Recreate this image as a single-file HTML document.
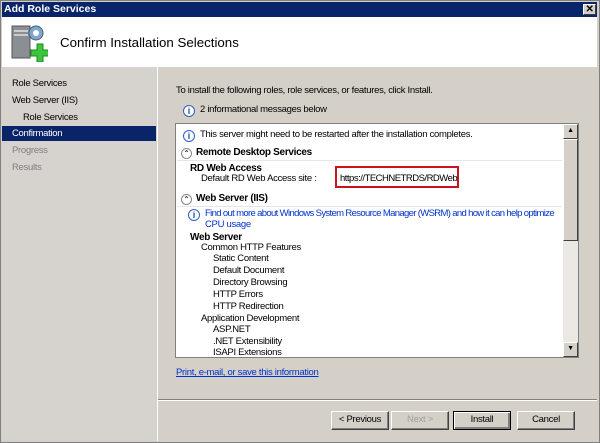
<!DOCTYPE html>
<html><head><style>
*{margin:0;padding:0;box-sizing:border-box}
body{width:600px;height:443px;background:#d4d0c8;font-family:"Liberation Sans",sans-serif;font-size:9.5px;letter-spacing:-0.3px;position:relative;overflow:hidden;color:#000}
.a{position:absolute;white-space:nowrap}
.b{font-weight:bold;font-size:10px}
.btn{position:absolute;top:411px;height:19px;width:58px;background:#d4d0c8;border:1px solid;border-color:#fff #404040 #404040 #fff;box-shadow:inset -1px -1px #808080;text-align:center;line-height:16px}
.i{display:inline-block;width:12px;height:12px;border:1px solid #3060c0;border-radius:50%;color:#2050b0;font-size:9px;line-height:10px;text-align:center;font-weight:bold;background:#fff;vertical-align:-2px;margin-right:5px;letter-spacing:0}
.c{display:inline-block;width:11px;height:11px;border:1px solid #888;border-radius:50%;font-size:8px;line-height:9px;text-align:center;background:#fff;vertical-align:-1px;margin-right:4px;font-weight:normal;letter-spacing:0}
</style></head><body>
<div class="a" style="left:0;top:0;width:600px;height:443px;border:1px solid #808080"></div>
<div class="a" style="left:2px;top:2px;width:595px;height:15px;background:#0a246a"></div>
<div class="a b" style="left:4px;top:3px;color:#fff;font-size:10.5px;letter-spacing:0">Add Role Services</div>
<div class="a" style="left:583px;top:4px;width:13px;height:11px;background:#d4d0c8;border:1px solid;border-color:#fff #404040 #404040 #fff;font-size:10px;line-height:9px;text-align:center;font-weight:bold">✕</div>
<div class="a" style="left:2px;top:17px;width:595px;height:50px;background:#fff"></div>
<svg class="a" style="left:10px;top:22px" width="38" height="40"><rect x="2" y="4" width="18" height="32" fill="#8a8f96" stroke="#555"/><rect x="4" y="8" width="14" height="2" fill="#ccc"/><rect x="4" y="12" width="14" height="2" fill="#ccc"/><circle cx="26" cy="11" r="7" fill="#7fa7c9" stroke="#406080"/><circle cx="26" cy="11" r="3" fill="#fff"/><path d="M27 22h6v6h6v6h-6v6h-6v-6h-6v-6h6z" fill="#3cc53c" stroke="#1a8a1a"/></svg>
<div class="a" style="left:60px;top:35px;font-size:13.3px;letter-spacing:0">Confirm Installation Selections</div>
<div class="a" style="left:2px;top:67px;width:155px;height:374px;background:#d6d3ce"></div>
<div class="a" style="left:157px;top:67px;width:1px;height:374px;background:#fff"></div>
<div class="a" style="left:12px;top:78px">Role Services</div>
<div class="a" style="left:12px;top:95px">Web Server (IIS)</div>
<div class="a" style="left:23px;top:112px">Role Services</div>
<div class="a" style="left:2px;top:126px;width:154px;height:15px;background:#0a246a"></div>
<div class="a" style="left:12px;top:128px;color:#fff">Confirmation</div>
<div class="a" style="left:12px;top:145px;color:#808080">Progress</div>
<div class="a" style="left:12px;top:162px;color:#808080">Results</div>
<div class="a" style="left:176px;top:85px">To install the following roles, role services, or features, click Install.</div>
<div class="a" style="left:183px;top:104px"><span class="i">i</span>2 informational messages below</div>
<div class="a" style="left:175px;top:123px;width:404px;height:235px;background:#fff;border:1px solid #808080"></div>
<div class="a" style="left:563px;top:124px;width:15px;height:233px;background:#ece9e4"></div>
<div class="a" style="left:563px;top:124px;width:15px;height:15px;background:#d4d0c8;border:1px solid;border-color:#fff #404040 #404040 #fff;font-size:7px;text-align:center;line-height:12px">▲</div>
<div class="a" style="left:563px;top:342px;width:15px;height:15px;background:#d4d0c8;border:1px solid;border-color:#fff #404040 #404040 #fff;font-size:7px;text-align:center;line-height:12px">▼</div>
<div class="a" style="left:563px;top:139px;width:15px;height:102px;background:#d4d0c8;border:1px solid;border-color:#fff #404040 #404040 #fff"></div>
<div class="a" style="left:183px;top:129px"><span class="i">i</span>This server might need to be restarted after the installation completes.</div>
<div class="a b" style="left:181px;top:147px"><span class="c">⌃</span>Remote Desktop Services</div>
<div class="a" style="left:177px;top:160px;width:385px;height:1px;background:#e6e6e6"></div>
<div class="a b" style="left:190px;top:163px">RD Web Access</div>
<div class="a" style="left:201px;top:173px">Default RD Web Access site :</div>
<div class="a" style="left:335px;top:166px;width:124px;height:22px;border:2px solid #c8141e"></div>
<div class="a" style="left:340px;top:173px;letter-spacing:-0.5px">https://TECHNETRDS/RDWeb</div>
<div class="a b" style="left:181px;top:193px"><span class="c">⌃</span>Web Server (IIS)</div>
<div class="a" style="left:177px;top:206px;width:385px;height:1px;background:#e6e6e6"></div>
<div class="a" style="left:188px;top:208px;color:#0033cc;letter-spacing:-0.65px"><span class="i">i</span>Find out more about Windows System Resource Manager (WSRM) and how it can help optimize</div>
<div class="a" style="left:205px;top:219px;color:#0033cc">CPU usage</div>
<div class="a b" style="left:190px;top:232px">Web Server</div>
<div class="a" style="left:201px;top:242px">Common HTTP Features</div>
<div class="a" style="left:213px;top:253px">Static Content</div>
<div class="a" style="left:213px;top:265px">Default Document</div>
<div class="a" style="left:213px;top:277px">Directory Browsing</div>
<div class="a" style="left:213px;top:289px">HTTP Errors</div>
<div class="a" style="left:213px;top:301px">HTTP Redirection</div>
<div class="a" style="left:201px;top:313px">Application Development</div>
<div class="a" style="left:213px;top:324px">ASP.NET</div>
<div class="a" style="left:213px;top:336px">.NET Extensibility</div>
<div class="a" style="left:213px;top:347px">ISAPI Extensions</div>
<div class="a" style="left:176px;top:367px;color:#0033cc;text-decoration:underline">Print, e-mail, or save this information</div>
<div class="a" style="left:158px;top:399px;width:439px;height:1px;background:#808080"></div>
<div class="a" style="left:158px;top:400px;width:439px;height:1px;background:#fff"></div>
<div class="btn" style="left:331px">&lt; Previous</div>
<div class="btn" style="left:391px;color:#a0a0a0">Next &gt;</div>
<div class="btn" style="left:453px;border:1px solid #000;box-shadow:inset 1px 1px #fff,inset -2px -2px #808080">Install</div>
<div class="btn" style="left:517px">Cancel</div>
</body></html>
